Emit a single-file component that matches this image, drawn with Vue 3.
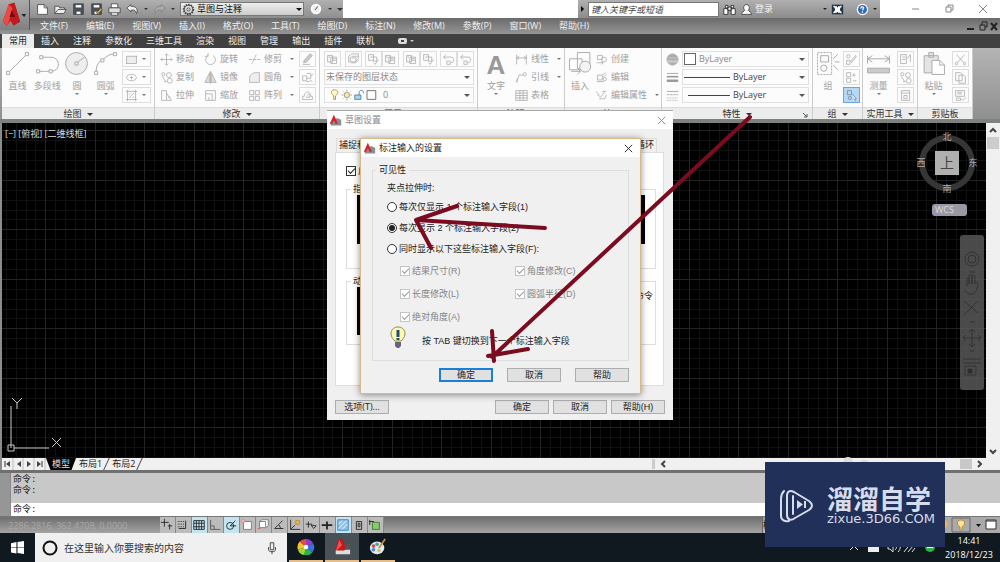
<script setup>
import { h, ref } from 'vue'

const art = {
  line: '<path d="M3 13 13 3"/><rect x="1" y="13" width="2" height="2"/><rect x="13" y="1" width="2" height="2"/>',
  pline: '<path d="M3 13h6M5 4h5a4.500 4.500 0 0 1 1 9"/><rect x="1" y="12" width="2" height="2"/><rect x="9" y="12" width="2" height="2"/><rect x="3" y="3" width="2" height="2"/>',
  circle: '<circle cx="8" cy="8" r="7" fill="#eee"/><path d="m9 7 4-3"/><rect x="7" y="7" width="2" height="2"/>',
  arc: '<path d="M2 13c0-3 1-5 3-7M7 5c2-2 4-3 6-3"/><rect x="1" y="13" width="2" height="2"/><rect x="5" y="5" width="2" height="2"/><rect x="13" y="1" width="2" height="2"/>',
  rect: '<rect x="2" y="4" width="12" height="9" fill="#eee"/><path d="M1 13h2M13 4h2"/>',
  ellipse: '<ellipse cx="8" cy="8" rx="6" ry="4"/><path d="M8 6v4M6 8h4"/>',
  hatch: '<path d="M3 1v14M13 1v14M1 3h14M1 13h14M5 11l6-6M5 7l2-2M9 11l2-2"/>',
  move: '<path d="M8 1v14M1 8h14M6 3l2-2 2 2M6 13l2 2 2-2M3 6 1 8l2 2M13 6l2 2-2 2"/>',
  copy: '<circle cx="4" cy="4" r="2"/><circle cx="11" cy="5" r="3"/><circle cx="12" cy="12" r="3"/><path d="m3 7 4 6M5 13h3"/>',
  stretch: '<path d="M2 2h6v12H2zM8 5l6 9H8M10 10h3"/>',
  rotate: '<path d="M5 3a6 6 0 1 0 6 0M5 0v4H1"/>',
  mirror: '<path d="M7 2v12H1zM9 2v12h6zM8 0v16" fill="#ddd"/>',
  scale: '<path d="M2 2h12v12H2zM2 6h8v8M6 10v4"/>',
  trim: '<path d="M1 8h4M11 8h4M10 2 5 13M6 8h4" stroke-dasharray="4 1"/>',
  fillet: '<path d="M2 14V9c0-4 3-7 8-7h4v12z" fill="#eee"/>',
  array: '<path d="M2 2h5v5H2zM9 2h5v5H9zM2 9h5v5H2zM9 9h5v5H9z"/>',
  pencil: '<path d="m4 9 7-8 3 2-7 8-4 1zM2 14h9" fill="#ccc"/>',
  explode: '<path d="M2 6h5v6H2zM7 3h5v6H7M12 6l3-2M11 11l3 2M7 13h4"/>',
  offset: '<path d="M2 13h12V9h-2c0-7-8-7-8 0H2zM6 10h5V8c0-2-3-2-3 0"/>',
  layer: '<path d="M2 3h6v8H2zM6 5h7v8H6zM8 7h4M8 9h4M3 5h2"/>',
  layers: '<path d="M2 8V4l4-3h8v6l-4 4H2zM4 10V6l3-2h7M5 12h6l3-3M6 6h5v4"/>',
  check: '<path d="M2 2h6v7H2zM4 5h8v5H7M8 12l2 2 4-6"/>',
  undo: '<path d="M2 5h9c5 0 4 7 0 7M5 2 2 5l3 3M6 10h4v4H6z"/>',
  dim: '<path d="M2 2v12M14 2v12M2 6h12M5 4 2 6l3 2M11 4l3 2-3 2"/>',
  leader: '<path d="M2 14 5 5h5M2 14l1-5"/><circle cx="12" cy="4" r="2"/>',
  table: '<path d="M1 2h14v12H1zM1 5h14M1 8h14M1 11h14M6 2v12M10 2v12"/>',
  insert: '<path d="M6 1h8v10H6zM1 5h8v7H1z" fill="#fff"/><circle cx="11" cy="10" r="3.500" fill="#f4f4f4"/><path d="M2 13h6M6 11l2 2-2 2"/>',
  create: '<path d="M3 3h6v5H3zM2 12h8"/><circle cx="11" cy="8" r="3"/><path d="m8 10 2 2-2 2"/>',
  edit: '<path d="M3 5h6v6H3zM2 13h9M9 5l4-3M10 8l4-4"/><circle cx="12" cy="10" r="2"/>',
  attr: '<path d="M1 3l4 4M13 2 7 10l-4-3M5 12h7l2-5M9 3h4"/>',
  wheel: '<circle cx="8" cy="8" r="7" fill="#aaa" stroke="#bbb"/><path d="M2 6h12M1 9h14" stroke="#d0d0d0"/><path d="M2 11h12" stroke="#eee"/>',
  weights: '<path d="M1 3h14"/><path d="M1 7h14" stroke-width="2"/><path d="M1 12h14" stroke-width="3"/>',
  types: '<path d="M1 3h14"/><path d="M1 7h14" stroke-dasharray="3 1"/><path d="M1 11h14M1 14h14" stroke-dasharray="1 1"/>',
  group: '<path d="M1 1h9v14H1z" stroke-dasharray="2 1"/><path d="M3 3h5v4H3z"/><circle cx="5" cy="11" r="2"/><path d="m11 5 3-3M12 7h3M11 9l3 3"/>',
  grp: '<circle cx="4" cy="4" r="2"/><path d="M2 9h4v5H2zM7 10l6-7 1 1-6 8z"/>',
  grp2: '<path d="M2 2h5v5H2zM2 9h5v5H2zM11 3v4M9 5h4M10 12h4"/>',
  grp3: '<path d="M3 2h5v5H3z"/><circle cx="6" cy="11" r="2"/><path d="m9 6 5 6-2 0 1 3" fill="#fff"/>',
  measure: '<path d="M1 3v5M15 3v5M1 5h14M4 3 1 5l3 2M12 3l3 2-3 2"/><path d="M1 11h14v3H1z" fill="#ccc"/>',
  quick: '<path d="M2 2h7v11H2zM4 5h4M4 8h4M10 7l4-5v9"/>',
  calc: '<path d="M3 2h10v12H3zM3 5h10M6 8h4v4H6z"/>',
  paste: '<path d="M2 3h9v11H2zM5 1h3v3H5z" fill="#e4e4e4"/><path d="M7 6h5l3 3v6H7z" fill="#fff"/><path d="M12 6v3h3"/>',
  cut: '<path d="m3 2 9 10M13 2 4 12"/><circle cx="3" cy="13" r="1.500"/><circle cx="13" cy="13" r="1.500"/>',
  page: '<path d="M2 2h6l2 2v8H2zM6 5h6l2 2v8H6z"/>',
  match: '<path d="M2 2h11v7H2zM4 4h6M4 6h6M3 11h5v3H3zM9 12l2 2 4-4"/>',
  new: '<path d="M2 2h8l4 4v8H2z" fill="#fff"/><path d="M10 2v4h4"/>',
  open: '<path d="M1 13V4h5l1 2h6v2M1 13l4-5h10l-3 5z" fill="#eee"/>',
  save: '<path d="M2 1h12v13H2z" fill="#4a525e"/><path d="M4 2h8v4H4zM5 10h6v4H5z" fill="#fff"/>',
  saveas: '<path d="M2 1h12v13H2z" fill="#4a525e"/><path d="M4 2h8v4H4zM5 10h6v4H5z" fill="#fff"/><path d="m8 12 5-6 2 2-5 6z" fill="#e0a040"/>',
  print: '<path d="M4 1h8v5H4zM4 10h8v5H4z" fill="#fff"/><path d="M1 6h14v6H1z" fill="#ddd"/>',
  back: '<path d="M1 6 6 2v2c7 0 9 4 7 9-1-4-3-5-7-4v2z" fill="#eee"/>',
  fwd: '<path d="m15 6-5-4v2C3 4 1 8 3 13c1-4 3-5 7-4v2z" fill="#aaa" stroke="#808080"/>',
  gear: '<circle cx="8" cy="8" r="6" stroke-width="2" stroke-dasharray="2 1"/><circle cx="8" cy="8" r="5"/><circle cx="8" cy="8" r="2"/>',
  bino: '<path d="M3 3h3v3H3zM10 3h3v3h-3zM6 5h4v4H6zM1 7h5v7H1zM10 7h5v7h-5z" fill="#fff"/>',
  user: '<path d="M2 14c0-4 3-3 4-5-3-3-1-7 2-7s5 4 2 7c1 2 4 1 4 5z" fill="#fff"/>'
}
const Ico = (p) => h('svg', { viewBox: '0 0 16 16', class: 'ico', 'aria-hidden': 'true', innerHTML: art[p.n] })
Ico.props = ['n']

const menus = ['文件(F)', '编辑(E)', '视图(V)', '插入(I)', '格式(O)', '工具(T)', '绘图(D)', '标注(N)', '修改(M)', '参数(P)', '窗口(W)', '帮助(H)']
const tabs = ['常用', '插入', '注释', '参数化', '三维工具', '渲染', '视图', '管理', '输出', '插件', '联机']
const drawTools = [['line', '直线'], ['pline', '多段线'], ['circle', '圆', 1], ['arc', '圆弧', 1]]
const modify = [
  [['move', '移动'], ['rotate', '旋转'], ['trim', '修剪', 1], 'pencil'],
  [['copy', '复制'], ['mirror', '镜像'], ['fillet', '圆角', 1], 'explode'],
  [['stretch', '拉伸'], ['scale', '缩放'], ['array', '阵列', 1], 'offset']
]
const layerPairs = [['layer'], ['layers'], ['check', 'layer'], ['layer', 'check'], ['undo', 'undo']]
const annot = [['dim', '线性', 1], ['leader', '引线', 1], ['table', '表格']]
const block = [['create', '创建'], ['edit', '编辑'], ['attr', '编辑属性', 1]]
const status = [
  ['<path d="M1 5h9M5 1v9"/><path d="M9 9h5M11 7v6"/>'],
  ['<path d="M2 4h7M2 7h7M2 10h7" stroke-dasharray="1 1"/><path d="M11 3v9H3"/>'],
  ['<path d="M2 3h12v10H2zM2 6h12M2 10h12M5 3v10M8 3v10M11 3v10"/>', 1],
  ['<path d="M3 2v11h11M3 9h4v4" stroke="#555"/>'],
  ['<circle cx="7" cy="9" r="4"/><path d="m7 9 6-6M7 9h7"/>', 1],
  ['<path d="M4 4h9v9H4z" fill="#fff" stroke="#777"/><path d="M2 2h3v3H2z" stroke="#d88" fill="#fcc"/>'],
  ['<path d="M4 4h7v7H4zM4 4l3-2h7v7l-3 2" fill="#fff" stroke="#777"/><path d="M2 12h3" stroke="#d55"/>'],
  ['<path d="M12 3 3 12h10M8 8l2 4"/>'],
  ['<path d="M3 2v11h11M3 13l5-5"/><path d="M9 3h4v4H9z" fill="#eb5" stroke="#b82"/>'],
  ['<path d="M2 7h7M5 4v7M8 8l6 1-3 3z"/>'],
  ['<path d="M2 8h12M8 4v9" stroke-width="2"/>'],
  ['<path d="M2 2h12v12H2z" fill="#8bc4ee" stroke="#3c7fb5"/><path d="m3 7 4-4M3 12 12 3M7 13l6-6" stroke="#fff"/>', 1],
  ['<path d="M5 4h6v9H5zM7 6h2v4H7z"/>'],
  ['<path d="M5 5h8v8H5z" fill="#8c6" stroke="#373"/><path d="M2 2v6M1 4h6"/>']
]
const openMode = ref('2')
const cad = '<path d="M2 14h13V7l-5-2-8 5z" fill="#8a8f94"/><path d="M1 12 6 1l5 11H8l-1-3H5l-1 3z" fill="#d22"/>'
</script>

<template>
  <div class="app">
    <header>
      <button class="logo" aria-label="应用程序菜单">
        <svg viewBox="0 0 30 28"><path d="M3 21 9 3l6-2 6 20-7 4-3-5-4 5z" fill="#c3191d"/><path d="m9 3 4 4-5 18-5-4z" fill="#ea4a45"/><path d="m12 9 4 7h-6z" fill="#6e0c10"/><path d="m22 13 5 0-2 3z" fill="#222"/></svg>
      </button>
      <div class="head-main">
        <div class="titlebar">
          <div class="quick">
            <button v-for="n in ['new','open','save','saveas','print','back']" :key="n" :aria-label="n"><Ico :n="n" /></button>
            <i class="tri"></i><button aria-label="redo"><Ico n="fwd" /></button><i class="tri"></i>
            <label class="space"><Ico n="gear" /><select aria-label="工作空间"><option>草图与注释</option></select><i class="tri big"></i></label>
            <svg class="dial" viewBox="0 0 16 16"><circle cx="8" cy="8" r="5" fill="#eee" stroke="#fff" stroke-width="2"/><path d="m7 9 3-4" stroke="#333"/></svg>
            <i class="tri"></i><i class="tri big"></i>
          </div>
          <div class="find">
            <i class="right"></i><input placeholder="键入关键字或短语" aria-label="搜索帮助" />
            <button aria-label="搜索"><Ico n="bino" /></button>
            <button class="login"><Ico n="user" />登录</button>
            <i class="tri"></i>
            <svg viewBox="0 0 16 16"><path d="M1 2h14v12H1z" fill="#234"/><path d="M3 4c4 1 4 7 0 8M13 4c-4 1-4 7 0 8M6 4l4 8M10 4l-4 8" stroke="#fff" stroke-width="2" fill="none"/></svg>
            <svg class="help" viewBox="0 0 16 16"><circle cx="8" cy="8" r="7" fill="#fff"/><circle cx="8" cy="8" r="5.500" fill="#3268b8"/><path d="M6 7c0-4 5-2 3 0L8 9M8 10v2" stroke="#fff" stroke-width="1.500" fill="none"/></svg>
            <i class="tri"></i>
          </div>
          <div class="win">
            <svg viewBox="0 0 12 12"><path d="M3 6h7"/></svg>
            <svg viewBox="0 0 12 12"><path d="M3 4h5v5H3zM5 4V2h5v5H8"/></svg>
            <svg viewBox="0 0 12 12"><path d="m2 2 8 8M10 2l-8 8"/></svg>
          </div>
        </div>
        <nav class="menus">
          <a v-for="m in menus" :key="m" href="#">{{ m }}</a>
          <svg class="mdi" viewBox="0 0 36 12"><path d="M3 9h7" stroke-width="2"/><path d="M16 5h5v5h-5zM18 5V2h5v5h-2"/><path d="m27 3 6 7M33 3l-6 7" stroke-width="2"/></svg>
        </nav>
      </div>
    </header>

    <nav class="tabs">
      <button v-for="(t, i) in tabs" :key="t" :class="{ on: !i }">{{ t }}</button>
      <svg viewBox="0 0 18 10"><rect x="1" y="2" width="9" height="6" rx="2" fill="#ddd"/><rect x="4" y="4" width="3" height="2" fill="#444"/><path d="m13 4 4 0-2 2z" fill="#ccc"/></svg>
    </nav>

    <section class="ribbon">
      <div class="panel">
        <div class="body draw">
          <button v-for="d in drawTools" :key="d[0]" class="bigtool"><Ico :n="d[0]" />{{ d[1] }}<i v-if="d[2]" class="tri"></i></button>
          <div class="stack">
            <button v-for="n in ['rect','ellipse','hatch']" :key="n" class="split" :aria-label="n"><Ico :n="n" /><i class="tri"></i></button>
          </div>
        </div>
        <footer>绘图 <i class="tri big"></i></footer>
      </div>
      <div class="panel">
        <div class="body modify">
          <template v-for="(r, i) in modify" :key="i">
            <button v-for="c in r.slice(0, 3)" :key="c[0]" class="tool"><Ico :n="c[0]" />{{ c[1] }}<i v-if="c[2]" class="tri"></i></button>
            <button class="sq" :aria-label="r[3]"><Ico :n="r[3]" /></button>
          </template>
        </div>
        <footer>修改 <i class="tri big"></i></footer>
      </div>
      <div class="panel">
        <div class="body rows">
          <div class="pairs">
            <span v-for="(p, i) in layerPairs" :key="i"><button v-for="(n, j) in p" :key="j" class="sq" :aria-label="n"><Ico :n="n" /></button></span>
          </div>
          <label class="drop"><select aria-label="图层状态"><option>未保存的图层状态</option></select><i class="tri big"></i></label>
          <label class="drop"><svg class="lay" viewBox="0 0 54 16"><path d="M5 9C0 5 3 2 6 2s6 3 1 7v4H5z" fill="#fff6cc" stroke="#a98c50"/><circle cx="20" cy="8" r="3" fill="#ffe9a0" stroke="#998"/><path d="M20 2v2M20 12v2M14 8h2M24 8h2M16 4l1 1M23 11l1 1M24 4l-1 1M16 12l1-1" stroke="#998"/><path d="M29 8h7v5h-7z" fill="#a8d4ee" stroke="#4a7fa5"/><path d="M34 8V5c0-3 5-3 5 0v1" fill="none" stroke="#4a7fa5"/><path d="M43 3h10v10H43z" fill="#fff" stroke="#666"/></svg><select aria-label="图层"><option>0</option></select><i class="tri big"></i></label>
        </div>
        <footer>图层 <i class="tri big"></i></footer>
      </div>
      <div class="panel">
        <div class="body note">
          <button class="bigtool text"><b>A</b>文字<i class="tri"></i></button>
          <div class="stack"><button v-for="c in annot" :key="c[0]" class="tool"><Ico :n="c[0]" />{{ c[1] }}<i v-if="c[2]" class="tri"></i></button></div>
        </div>
        <footer>注释 <i class="tri big"></i></footer>
      </div>
      <div class="panel">
        <div class="body">
          <button class="bigtool"><Ico n="insert" />插入</button>
          <div class="stack"><button v-for="c in block" :key="c[0]" class="tool"><Ico :n="c[0]" />{{ c[1] }}<i v-if="c[2]" class="tri"></i></button></div>
        </div>
        <footer>块 <i class="tri big"></i></footer>
      </div>
      <div class="panel">
        <div class="body rows props">
          <div class="prop"><Ico n="wheel" /><label class="drop"><i class="swatch"></i><select aria-label="颜色"><option>ByLayer</option></select><i class="tri big"></i></label></div>
          <div class="prop"><Ico n="weights" /><label class="drop dark"><i class="rule"></i><select aria-label="线宽"><option>ByLayer</option></select><i class="tri big"></i></label></div>
          <div class="prop"><Ico n="types" /><label class="drop dark"><i class="rule short"></i><select aria-label="线型"><option>ByLayer</option></select><i class="tri big"></i></label></div>
        </div>
        <footer>特性 <i class="tri big"></i><svg class="more" viewBox="0 0 6 6"><path d="M1 1l4 4M5 2v3H2" fill="none" stroke="#555"/></svg></footer>
      </div>
      <div class="panel">
        <div class="body"><button class="bigtool"><Ico n="group" />组</button>
          <div class="stack"><button class="sq" aria-label="取消编组"><Ico n="grp" /></button><button class="sq" aria-label="组编辑"><Ico n="grp2" /></button><button class="sq blue" aria-label="组选择"><Ico n="grp3" /></button></div></div>
        <footer>组 <i class="tri big"></i></footer>
      </div>
      <div class="panel">
        <div class="body"><button class="bigtool"><Ico n="measure" />测量<i class="tri"></i></button>
          <div class="stack"><button v-for="n in ['quick','copy','calc']" :key="n" class="sq" :aria-label="n"><Ico :n="n" /></button></div></div>
        <footer>实用工具 <i class="tri big"></i></footer>
      </div>
      <div class="panel">
        <div class="body"><button class="bigtool"><Ico n="paste" />粘贴<i class="tri"></i></button>
          <div class="stack"><button v-for="n in ['cut','page','match']" :key="n" class="sq" :aria-label="n"><Ico :n="n" /></button></div></div>
        <footer>剪贴板</footer>
      </div>
    </section>

    <main class="work">
      <div class="canvas">
        <svg class="grid" width="100%" height="100%">
          <defs><pattern id="mesh" x="43" y="7" width="99" height="99" patternUnits="userSpaceOnUse">
            <path d="M10 0h1v99h-1zM20 0h1v99h-1zM30 0h1v99h-1zM40 0h1v99h-1zM60 0h1v99h-1zM70 0h1v99h-1zM80 0h1v99h-1zM89 0h1v99h-1zM0 10h99v1H0zM0 20h99v1H0zM0 30h99v1H0zM0 40h99v1H0zM0 60h99v1H0zM0 70h99v1H0zM0 80h99v1H0zM0 89h99v1H0z" fill="#101113"/>
            <path d="M0 0h1v99H0zM50 0h1v99h-1zM0 0h99v1H0zM0 50h99v1H0z" fill="#222426"/>
          </pattern></defs>
          <rect width="100%" height="100%" fill="#000"/><rect width="100%" height="100%" fill="url(#mesh)"/>
        </svg>
        <p class="view">[−] [俯视] [二维线框]</p>
        <svg class="ucs" viewBox="0 0 60 60"><path d="M5 10v42M8 52h35M2 49h6v6H2zM6 2l5 5 5-5M11 7v6M46 42l9 9M55 42l-9 9" transform="translate(0 -1)"/></svg>
        <div class="cube"><span class="n">北</span><span>西</span><b>上</b><span>东</span><span class="s">南</span></div>
        <div class="wcs">WCS</div>
        <svg class="navbar" viewBox="0 0 24 155"><rect width="24" height="155" rx="3" fill="#585858"/><g fill="none" stroke="#3a3a3a"><circle cx="12" cy="24" r="7"/><circle cx="12" cy="24" r="4"/><path d="M9 37h6M7 52v-8c0-2 2-2 2 0v5-8c0-2 3-2 3 0v8-7c0-2 3-2 3 0v7c3-3 4 0 2 4-1 8-10 8-12 2M4 66l14 12M18 66 4 80M10 87h5M12 94v18M3 103h18M9 97l3-3 3 3M9 109l3 3 3-3M6 100l-3 3 3 3M18 100l3 3-3 3M10 116h4M3 124h18M3 128h18M5 131h11v9H5z"/><path d="M8 134h4v4H8z" fill="#333"/></g></svg>
        <svg class="scroll" viewBox="0 0 14 335" preserveAspectRatio="none"><rect width="14" height="335" fill="#f0f0f0"/><rect x="1" y="14" width="12" height="12" fill="#cdcdcd"/><path d="m4 9 3-3 3 3M4 327l3 3 3-3" fill="none" stroke="#444" stroke-width="2"/></svg>
      </div>

      <div class="layouts">
        <svg class="steps" viewBox="0 0 44 12"><path d="M11 0v12M21 0v12M32 0v12M43 0v12" stroke="#bbb"/><path d="M3 3v6M40 3v6" stroke="#333"/><path d="m8 3-4 3 4 3zM19 3l-4 3 4 3zM25 3l4 3-4 3zM35 3l4 3-4 3z" fill="#444"/></svg>
        <button class="model">模型</button><button class="lay1">布局1</button><i class="slash"></i><button class="lay1">布局2</button><i class="slash"></i>
        <div class="hscroll"><svg viewBox="0 0 6 8"><path d="M5 1 2 4l3 3"/></svg><i></i><svg viewBox="0 0 6 8"><path d="m1 1 3 3-3 3"/></svg></div>
      </div>
      <div class="command"><i class="grip"></i><div><p>命令:</p><p>命令:</p><label>命令:<input aria-label="命令输入" /></label></div></div>

      <div class="dialog outer" role="dialog" aria-label="草图设置">
        <h2><svg viewBox="0 0 16 16" v-html="cad"></svg>草图设置<button aria-label="关闭"><svg viewBox="0 0 12 12"><path d="m2 2 8 8M10 2l-8 8"/></svg></button></h2>
        <div class="cards"><span>捕捉和栅格</span><span>选择循环</span></div>
        <div class="pagebox">
          <label class="opt"><input type="checkbox" checked />启用指针输入</label>
          <fieldset><legend>指针输入</legend><div class="preview"></div></fieldset>
          <fieldset><legend>动态提示</legend><div class="preview half"></div><span class="cmd">命令</span></fieldset>
        </div>
        <div class="foot"><button>选项(T)...</button><i></i><button>确定</button><button>取消</button><button>帮助<span class="m">(H)</span></button></div>
      </div>

      <div class="dialog inner" role="dialog" aria-label="标注输入的设置">
        <h2><svg viewBox="0 0 16 16" v-html="cad"></svg>标注输入的设置<button aria-label="关闭"><svg viewBox="0 0 12 12"><path d="m2 2 8 8M10 2l-8 8"/></svg></button></h2>
        <fieldset>
          <legend>可见性</legend>
          <p>夹点拉伸时:</p>
          <label class="opt"><input v-model="openMode" type="radio" name="fields" value="1" /><span>每次仅显示<span class="m">&nbsp;1&nbsp;</span>个标注输入字段<span class="m">(1)</span></span></label>
          <label class="opt"><input v-model="openMode" type="radio" name="fields" value="2" /><span>每次显示<span class="m">&nbsp;2&nbsp;</span>个标注输入字段<span class="m">(2)</span></span></label>
          <label class="opt"><input v-model="openMode" type="radio" name="fields" value="3" /><span>同时显示以下这些标注输入字段<span class="m">(F):</span></span></label>
          <div class="checks">
            <label v-for="c in [['结果尺寸','(R)'],['角度修改','(C)'],['长度修改','(L)'],['圆弧半径','(D)'],['绝对角度','(A)']]" :key="c[0]" class="opt"><input type="checkbox" checked disabled /><span>{{ c[0] }}<span class="m">{{ c[1] }}</span></span></label>
          </div>
          <div class="tip"><svg viewBox="0 0 16 22"><path d="M5 15C-2 9 1 1 8 1s10 8 3 14z" fill="#fdfab0" stroke="#8b8b4a"/><path d="M8 4v7M8 12v2" stroke="#234a80" stroke-width="3"/><path d="M5 16h6v4l-2 2H7l-2-2z" fill="#667"/></svg><span>按<span class="m">&nbsp;TAB&nbsp;</span>键切换到下一个标注输入字段</span></div>
        </fieldset>
        <div class="foot"><button class="main">确定</button><button>取消</button><button>帮助</button></div>
      </div>

      <svg class="marks" viewBox="0 0 1000 400"><g stroke="#7c0b20" stroke-width="4" stroke-linecap="round" fill="none"><path d="M545 109 416 101l41-14M416 101l15 28"/><path d="M750-2 492 238M492 212l2 30M488 237l40-7"/></g></svg>
    </main>

    <div class="statusbar">
      <span class="coords">2286.2816, 362.4708, 0.0000</span>
      <button v-for="(s, i) in status" :key="i" :class="{ on: s[1] }" :aria-label="'状态 ' + i"><svg viewBox="0 0 16 16" class="ico" v-html="s[0]"></svg></button>
      <span class="mod">模型</span>
      <svg class="bulbs" viewBox="0 0 60 16"><path d="M1 3h5l2 4-2 4H1z" fill="#f3b44d"/><path d="M12 1h18v14H12z" fill="#aaa" stroke="#666"/><path d="M20 10c-5-4-2-7 1-7s6 3 1 7v3h-2z" fill="#ffe39a" stroke="#b98a38"/><path d="m36 7 5 0-2.500 3z" fill="#111"/><path d="M46 3h10v9H46z" fill="#fff" stroke="#333"/><path d="M46 4h10" stroke="#333"/></svg>
    </div>

    <div class="taskbar">
      <button class="start" aria-label="开始"><svg viewBox="0 0 12 12"><path d="m0 2 5-1v5H0zM6 1l6-1v6H6zM0 6.500h5v5l-5-1zM6 6.500h6V12l-6-1z" fill="#fff"/></svg></button>
      <label class="search"><svg viewBox="0 0 16 16"><circle cx="8" cy="8" r="6.500" fill="none" stroke="#111" stroke-width="2"/></svg><input placeholder="在这里输入你要搜索的内容" aria-label="搜索" /><svg viewBox="0 0 16 16"><path d="M6 2h4v8H6zM4 7v3c0 3 8 3 8 0V7M8 12v3" fill="none" stroke="#333"/></svg></label>
      <button class="task" aria-label="浏览器"><svg viewBox="0 0 20 20"><path d="M10 10V1a9 9 0 0 1 8 5z" fill="#8a3fd0"/><path d="m10 10 8-4a9 9 0 0 1-1 10z" fill="#3b6fe0"/><path d="m10 10 7 6a9 9 0 0 1-9 3z" fill="#28b24c"/><path d="m10 10-2 9a9 9 0 0 1-7-6z" fill="#9bd83a"/><path d="m10 10-9 3a9 9 0 0 1 2-9z" fill="#f0c52c"/><path d="M10 10 3 4a9 9 0 0 1 7-3z" fill="#ed4b35"/><circle cx="10" cy="10" r="2.500" fill="#fff"/></svg></button>
      <button class="task on" aria-label="AutoCAD"><svg viewBox="0 0 20 20"><path d="M9 6h10v8H9z" fill="#555"/><path d="m2 15 4-13 5-1 4 14z" fill="#c4161c"/><path d="m7 2 3 6-7 7z" fill="#ef524a"/><path d="M3 14h9l2-1h5v5H3z" fill="#ddd"/></svg></button>
      <button class="task" aria-label="画图"><svg viewBox="0 0 20 20"><ellipse cx="9" cy="11" rx="8" ry="7" fill="#dcebf5"/><circle cx="5" cy="9" r="2" fill="#d44"/><circle cx="9" cy="7" r="2" fill="#4a8"/><circle cx="5" cy="13" r="2" fill="#48c"/><circle cx="11" cy="14" r="2" fill="#eb4"/><path d="m11 11 7-10" stroke="#c98a3c" stroke-width="2"/></svg></button>
      <svg class="tray" viewBox="0 0 90 16"><path d="m2 11 4-4 4 4M40 6v4h2l3 3V3l-3 3zM47 5c2 2 2 4 0 6M50 3c3 3 3 7 0 10M56 13 63 4M60 13l5-6M64 13l3-4" fill="none" stroke="#ddd"/><path d="M20 5h11v8H20z" fill="#eee"/><circle cx="82" cy="8" r="5" fill="#2ab544"/><path d="M79 8h6" stroke="#fff" stroke-width="2"/></svg>
      <div class="clock">14:41<br />2018/12/23</div>
    </div>

    <aside class="brand">
      <svg class="puffs" viewBox="0 0 30 6"><path d="M0 6a5 5 0 0 1 10 0zM17 6a5 4 0 0 1 9 0z" fill="#ddd"/></svg>
      <svg viewBox="0 0 36 36"><g fill="none" stroke="#d7dcec" stroke-width="2" stroke-linecap="round" stroke-linejoin="round"><path d="M8 28V9c0-5 3-6 7-4l15 9c4 3 4 6 0 9l-14 8c-4 3-8 2-8-3"/><path d="M2 29V12c0-4 1-6 3-8M2 29c0 4 4 6 8 5"/><path d="M14 27V9"/></g><path d="m18 13 6 4.500-6 4.500z" fill="#d7dcec"/><path d="M26 14v7" stroke="#d7dcec" stroke-width="2"/></svg>
      <div><strong>溜溜自学</strong><span>zixue.3D66.COM</span></div>
    </aside>
  </div>
</template>

<style>
html, body { margin: 0; background: #10191f; }
</style>

<style scoped>
.app { position: relative; min-height: 100vh; display: flex; flex-direction: column; overflow: hidden; font: 9px/12px "Open Sans", "Noto Sans CJK SC", sans-serif; color: #333; }
.app * { box-sizing: border-box; }
button, input, select { font: inherit; color: inherit; background: none; border: 0; padding: 0; margin: 0; border-radius: 0; }
select { appearance: none; flex: 1; min-width: 0; outline: 0; }
p, h2 { margin: 0; font-weight: 400; font-size: 9px; }
a { color: inherit; text-decoration: none; }
svg { display: block; flex: none; }
.ico { width: 13px; height: 13px; fill: none; stroke: currentColor; stroke-width: 1; }
.tri { border: 2px solid transparent; border-top-color: currentColor; border-bottom: 0; width: 0; height: 0; flex: none; }
.tri.big { border-width: 3px; border-bottom: 0; }

header { display: flex; height: 34px; flex: none; }
.logo { position: relative; width: 30px; height: 30px; border-right: 1px solid #555; background: linear-gradient(#aaa, #808080); }
.logo svg { width: 29px; height: 28px; }
.head-main { flex: 1; min-width: 0; margin-left: -30px; }
.titlebar { display: flex; height: 18px; background: #fff; }
.quick { display: flex; align-items: center; gap: 5px; width: 343px; padding-left: 36px; background: linear-gradient(#b0b0b0, #8f8f8f); color: #333; }
.quick .ico { stroke: #444; }
.space { flex: 1; display: flex; align-items: center; gap: 2px; height: 14px; border: 1px solid #777; background: linear-gradient(#eee, #ccc); color: #111; padding: 0 1px; }
.dial { width: 14px; height: 14px; }
.find { margin-left: auto; display: flex; align-items: center; gap: 4px; width: 302px; background: linear-gradient(#b0b0b0, #8c8c8c); color: #222; }
.find svg { width: 13px; height: 13px; }
.find input { width: 131px; height: 15px; background: #fff; border: 1px solid #777; padding: 0 2px; }
.find input::placeholder { font-style: italic; color: #444; }
.right { border: 3px solid transparent; border-left-color: #000; border-right: 0; margin-left: 3px; }
.login { flex: 1; display: flex; align-items: center; gap: 2px; color: #f4f4f4; }
.login .ico { color: #333; }
.help { margin-left: 8px; }
.find .tri:last-child { margin-right: 3px; }
.win { width: 120px; display: flex; align-items: center; justify-content: space-around; padding-left: 18px; }
.win svg { width: 12px; height: 12px; stroke: #888; fill: none; }
.menus { display: flex; align-items: center; gap: 18px; height: 16px; padding-left: 40px; color: #f0f0f0; background: linear-gradient(#6a6a6a, #969696); }
.mdi { margin-left: auto; width: 36px; height: 12px; stroke: #222; fill: none; }
.tabs { display: flex; align-items: stretch; height: 14px; flex: none; background: #404040; color: #eee; padding-left: 2px; }
.tabs button { padding: 0 7px; line-height: 14px; }
.tabs .on { background: #ececec; color: #222; }
.tabs svg { width: 18px; height: 10px; margin: 2px 0 0 16px; }

.ribbon { display: grid; grid-template-columns: 153fr 165fr 158fr 87fr 97fr 151fr 50fr 55fr 55fr 27fr; height: 72px; flex: none; padding-left: 2px; background: linear-gradient(#b4b4b4, #8f8f8f); color: #a0a0a0; }
.panel { background: #fcfcfc; border-right: 1px solid #ccc; display: flex; flex-direction: column; min-width: 0; white-space: nowrap; overflow: hidden; }
.panel .ico { color: #adadad; }
.panel footer { height: 13px; background: #ececec; border-top: 1px solid #ddd; color: #333; display: flex; align-items: center; justify-content: center; gap: 5px; position: relative; }
.more { position: absolute; right: 4px; top: 4px; width: 6px; height: 6px; }
.body { flex: 1; padding: 3px; display: flex; gap: 3px; min-width: 0; justify-content: space-between; }
.bigtool { display: flex; flex-direction: column; align-items: center; min-width: 24px; gap: 1px; height: 100%; }
.bigtool .ico { width: 25px; height: 25px; margin-bottom: 3px; }
.bigtool .ico :deep(*) { vector-effect: non-scaling-stroke; }
.bigtool .tri, .split .tri { color: #777; }
.note { padding-left: 6px; }
.text b { font: 700 26px/28px "Liberation Sans", sans-serif; color: #999; }
.stack { display: grid; grid-template-rows: repeat(3, 16px); gap: 2px; align-content: start; flex: none; }
.split { display: flex; align-items: center; gap: 4px; border: 1px solid #ddd; padding: 0 4px 0 2px; }
.tool { display: flex; align-items: center; gap: 3px; text-align: left; }
.tool .tri { margin-left: 5px; color: #777; }
.modify { display: grid; grid-template-columns: 43fr 43fr 50fr 17px; grid-template-rows: repeat(3, 16px); gap: 2px 0; padding-left: 5px; }
.sq { width: 17px; height: 16px; border: 1px solid #ddd; display: grid; place-items: center; }
.blue { background: #b5d8f6; border-color: #6aa5dc; }
.blue .ico { color: #789; }
.rows { display: grid; grid-template-rows: repeat(3, 16px); gap: 2px; align-content: start; justify-content: stretch; padding-left: 4px; }
.pairs { display: flex; justify-content: space-between; }
.pairs span { display: flex; }
.drop { display: flex; align-items: center; height: 16px; border: 1px solid #e0e0e0; padding: 0 3px 0 1px; gap: 3px; min-width: 0; flex: 1; color: #8a8a8a; }
.drop .tri { color: #555; }
.lay { width: 54px; height: 14px; }
.prop { display: flex; align-items: center; gap: 3px; }
.prop .ico { color: #999; }
.dark { color: #444; }
.swatch { width: 12px; height: 12px; border: 1px solid #666; background: #fff; }
.rule { width: 46px; height: 1px; background: #444; }
.short { width: 42px; margin-left: 4px; }

.work { position: relative; flex: 1; display: flex; flex-direction: column; border-top: 4px solid #7e827e; padding-left: 2px; background: #8c8c8c; margin-top: -1px; }
.canvas { position: relative; flex: 1; min-height: 335px; background: #000; }
.grid { position: absolute; inset: 0; }
.view { position: absolute; left: 3px; top: 5px; color: #ddd; }
.ucs { position: absolute; left: 4px; bottom: 1px; width: 60px; height: 60px; fill: none; stroke: #c8c8c8; }
.cube { position: absolute; right: 24px; top: 11px; width: 58px; height: 58px; border-radius: 50%; color: #aaa; display: grid; grid-template: 10px 24px 10px / 10px 24px 10px; place-content: center; place-items: center; gap: 9px; }
.cube::before { content: ""; position: absolute; inset: 1px; border: 6px solid #363636; border-radius: 50%; }
.cube > * { position: relative; }
.cube .n, .cube .s { grid-column: 1 / 4; }
.cube b { width: 24px; height: 24px; background: #b0b0b0; color: #444; font: 400 14px/22px "Noto Sans CJK SC", sans-serif; text-align: center; }
.wcs { position: absolute; right: 33px; top: 81px; width: 35px; height: 12px; border-radius: 3px; background: #9a98a3; color: #dcdce4; padding-left: 3px; line-height: 12px; }
.navbar { position: absolute; right: 16px; top: 112px; width: 24px; height: 155px; opacity: .85; }
.scroll { position: absolute; right: 0; top: 0; width: 14px; height: 100%; }
.layouts { display: flex; height: 12px; background: #f0f0f0; color: #222; line-height: 12px; align-items: center; }
.steps { width: 44px; height: 12px; }
.model { background: #000; color: #ddd; width: 30px; clip-path: polygon(0 0, 100% 0, 85% 100%, 15% 100%); }
.lay1 { padding-left: 3px; }
.slash { width: 1px; height: 12px; background: #444; transform: skewX(-25deg); margin: 0 2px 0 4px; }
.hscroll { margin-left: auto; width: 348px; height: 10px; display: flex; align-items: center; border-left: 3px solid #ccc; padding: 0 17px 0 5px; }
.hscroll svg { width: 6px; height: 8px; fill: none; stroke: #444; stroke-width: 2; }
.hscroll i { margin-left: auto; width: 12px; height: 10px; background: #c8c8c8; margin-right: 5px; }
.command { display: flex; border-top: 3px solid #707070; margin-left: -2px; background: #c8c8c8; color: #222; font-family: "Liberation Mono", "Noto Sans CJK SC", monospace; border-bottom: 1px solid #777; }
.grip { width: 11px; background: #969696; border-right: 1px solid #888; }
.command > div { flex: 1; padding-top: 2px; }
.command p { line-height: 11px; padding-left: 2px; }
.command label { display: flex; margin-top: 6px; height: 13px; line-height: 14px; background: #fff; padding-left: 2px; }

.dialog { position: absolute; background: #f0f0f0; color: #222; display: flex; flex-direction: column; line-height: 12px; }
.dialog h2 { display: flex; align-items: center; gap: 3px; height: 18px; background: #fff; padding: 0 6px 0 2px; }
.dialog h2 > svg { width: 13px; height: 13px; }
.dialog h2 button { margin-left: auto; }
.dialog h2 button svg { width: 11px; height: 11px; stroke: currentColor; fill: none; }
.outer { left: 327px; top: -13px; width: 346px; height: 310px; border-top: 1px solid #aaa; z-index: 1; }
.outer h2 { color: #888; }
.inner { left: 360px; top: 15px; width: 281px; height: 256px; border: 1px solid #d9b98a; box-shadow: 0 1px 7px rgba(0,0,0,.45); z-index: 2; }
.cards { display: flex; justify-content: space-between; margin: 9px 16px 0 9px; padding: 0 2px; border: 1px solid #ddd; border-bottom: 0; height: 14px; }
.pagebox { margin: 0 9px 0 8px; height: 234px; border: 1px solid #ddd; background: #fff; padding: 11px 7px 0 10px; }
.pagebox fieldset { margin: 8px 0 0; height: 84px; padding: 2px 10px; border: 1px solid #ddd; position: relative; }
.pagebox fieldset + fieldset { height: 68px; margin-top: 8px; }
legend { padding: 0 2px; margin-left: -6px; line-height: 8px; }
.preview { height: 49px; background: #000; }
.half { width: 60%; height: 48px; }
.cmd { position: absolute; right: 2px; top: 5px; }
.opt { display: flex; align-items: center; gap: 2px; height: 13px; white-space: nowrap; }
.opt input { appearance: none; width: 10px; height: 10px; border: 1px solid #333; background: #fff; display: grid; place-items: center; flex: none; }
.opt input[type=radio] { border-radius: 50%; }
.opt input[type=radio]:checked::after { content: ""; width: 6px; height: 6px; border-radius: 50%; background: #222; }
.opt input[type=checkbox]:checked::after { content: ""; width: 6px; height: 3px; border: solid currentColor; border-width: 0 0 1px 1px; transform: rotate(-45deg); margin-bottom: 2px; }
.opt input:disabled { border-color: #c4c4c4; color: #999; }
.m { font: 9px/12px "Liberation Sans", sans-serif; white-space: pre; }
.inner fieldset { margin: 8px 11px 0; height: 196px; border: 1px solid #ddd; padding: 7px 12px 0 14px; }
.inner legend { margin-left: -11px; line-height: 10px; padding: 0 3px; }
.inner p { margin: 0 0 6px; }
.inner fieldset > .opt { margin-bottom: 8px; }
.checks { display: grid; grid-template-columns: 115px 1fr; row-gap: 10px; padding-left: 13px; color: #848484; margin-top: 9px; }
.tip { display: flex; gap: 16px; align-items: center; padding-left: 3px; margin-top: 3px; }
.tip svg { width: 16px; height: 22px; }
.tip > span { padding-top: 8px; }
.foot { display: flex; gap: 4px; margin: 14px 8px 0; }
.foot i { flex: 1; }
.foot button { width: 54px; height: 14px; border: 1px solid #adadad; background: #e1e1e1; line-height: 12px; white-space: nowrap; }
.inner .foot { justify-content: flex-end; gap: 14px; margin: 7px 11px 0; }
.foot .main { border: 2px solid #1a7fd6; line-height: 10px; }
.marks { position: absolute; left: 0; top: -4px; width: 1000px; height: 400px; z-index: 3; overflow: visible; pointer-events: none; }

.statusbar { display: flex; align-items: stretch; height: 16px; flex: none; background: linear-gradient(#6e6e6e, #a4a4a4); }
.coords { width: 160px; padding: 3px 0 0 8px; color: #a8a8a8; }
.statusbar button { width: 16px; background: #bcbcbc; border-right: 1px solid #888; color: #222; }
.statusbar button .ico { width: 14px; height: 14px; }
.statusbar .on { background: #c4e4f2; }
.mod { margin-left: auto; width: 178px; background: linear-gradient(#999, #bbb); line-height: 16px; border-left: 1px solid #666; color: #111; }
.bulbs { width: 60px; height: 16px; background: #aaa; }
.taskbar { display: flex; height: 29px; flex: none; background: #10191f; color: #fff; }
.start { width: 35px; display: grid; place-items: center; }
.start svg { width: 13px; height: 13px; }
.search { width: 252px; display: flex; align-items: center; gap: 6px; padding: 0 8px 0 7px; background: #f0f0f0; color: #333; font-size: 10px; }
.search svg { width: 16px; height: 16px; }
.search svg:last-child { width: 14px; }
.search input { flex: 1; min-width: 0; }
.search input::placeholder { color: #333; opacity: 1; }
.task { width: 34px; display: grid; place-items: center; margin-left: 2px; border-bottom: 2px solid #e8bd86; }
.task svg { width: 18px; height: 18px; }
.task.on { background: #4a5156; }
.tray { width: 90px; height: 16px; margin: 6px 0 0 auto; }
.clock { width: 62px; text-align: center; line-height: 14px; padding-top: 1px; }
.brand { position: absolute; right: 55px; bottom: 15px; width: 180px; height: 85px; background: #213058; color: #d7dcec; display: flex; align-items: center; gap: 12px; padding-left: 14px; z-index: 4; }
.brand svg { width: 36px; height: 36px; }
.brand .puffs { position: absolute; left: 78px; top: -6px; width: 30px; height: 6px; }
.brand strong { display: block; font: 700 26px/28px "Noto Sans CJK SC", sans-serif; }
.brand span { display: block; font: 13px/14px "DejaVu Sans", sans-serif; }
</style>
